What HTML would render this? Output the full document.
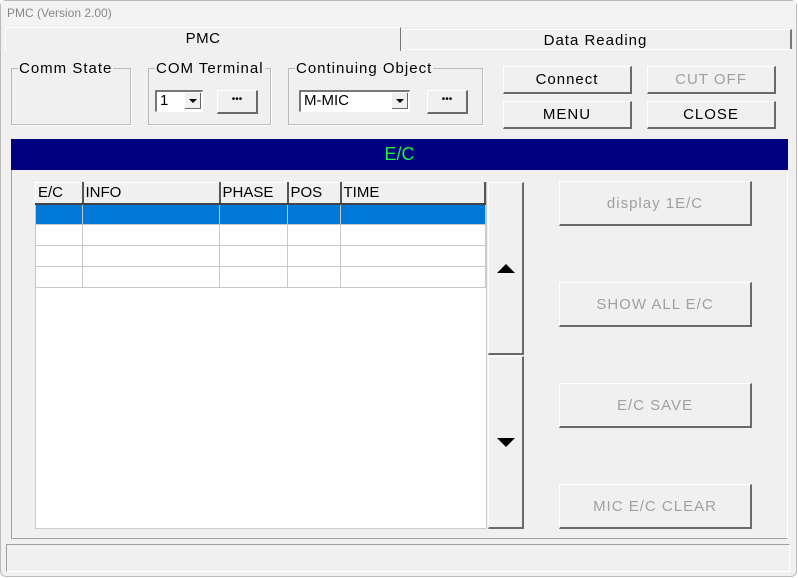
<!DOCTYPE html>
<html><head><style>
*{margin:0;padding:0;box-sizing:border-box}
body{width:798px;height:578px;background:#fff;position:relative;overflow:hidden;font-family:"Liberation Sans",sans-serif;font-size:15px;color:#000}
.a{position:absolute}
.win{left:0;top:0;width:797px;height:577px;background:#f0f0f0;box-shadow:inset 0 0 0 1px #bbb;border-radius:6px;overflow:hidden}
.title{left:1px;top:1px;width:795px;height:26px;background:#f3f3f3}
.btn{position:absolute;background:#f0f0f0;border-top:1px solid #fff;border-left:1px solid #fff;border-right:2px solid #6a6a6a;border-bottom:2px solid #6a6a6a;display:flex;align-items:center;justify-content:center;font-size:15px}
.dis{color:#a0a0a0}
.grp{position:absolute;border:1px solid #bcbcbc;box-shadow:1px 1px 0 #fff}
.grp span{position:absolute;top:-9px;left:6px;background:#f0f0f0;padding:0 1px;font-size:15px;line-height:17px;letter-spacing:1px}
.combo{position:absolute;background:#fff;border-top:2px solid #777;border-left:2px solid #777;border-bottom:1px solid #fff;border-right:1px solid #fff;font-size:15px;padding-left:3px;line-height:17px}
.arr{position:absolute;right:1px;top:1px;width:16px;height:16px;background:#f0f0f0;border-right:1px solid #666;border-bottom:1px solid #666}
.arr:after{content:"";position:absolute;left:4px;top:6px;border-left:4px solid transparent;border-right:4px solid transparent;border-top:4px solid #000}
table{border-collapse:collapse;position:absolute;left:35px;top:182px;width:451px}
td{border:1px solid #c8c8c8;height:21px;padding:0 2px;font-size:15px}
th{font-weight:normal;text-align:left;height:21px;padding:0 2px;border-right:2px solid #555;border-bottom:2px solid #444;border-top:1px solid #fff;border-left:1px solid #fff;background:#f0f0f0;font-size:15px}
</style></head><body>
<div class="a win">
<div class="a title"></div>
<div class="a" style="left:7px;top:6px;font-size:12px;color:#888">PMC (Version 2.00)</div>
<div class="a" style="left:5px;top:27px;width:396px;height:24px;border-top:1px solid #fff;border-left:1px solid #fff;border-right:1px solid #777;text-align:center;font-size:15px;padding-top:2px;letter-spacing:.5px">PMC</div>
<div class="a" style="left:401px;top:29px;width:391px;height:20px;border-top:1px solid #fff;border-right:2px solid #777;text-align:center;font-size:15px;padding-top:2px;letter-spacing:1px">Data Reading</div>
<div class="a" style="left:401px;top:49px;width:391px;height:1px;background:#fff"></div>
<div class="grp" style="left:11px;top:68px;width:120px;height:57px"><span>Comm State</span></div>
<div class="grp" style="left:148px;top:68px;width:123px;height:57px"><span>COM Terminal</span></div>
<div class="grp" style="left:288px;top:68px;width:195px;height:57px"><span>Continuing Object</span></div>
<div class="combo" style="left:155px;top:90px;width:48px;height:22px">1<div class="arr"></div></div>
<div class="btn" style="left:217px;top:90px;width:41px;height:24px;font-size:10px;padding-bottom:4px">•••</div>
<div class="combo" style="left:299px;top:90px;width:111px;height:22px">M-MIC<div class="arr"></div></div>
<div class="btn" style="left:427px;top:90px;width:41px;height:24px;font-size:10px;padding-bottom:4px">•••</div>
<div class="btn" style="left:503px;top:66px;width:129px;height:28px;letter-spacing:1px">Connect</div>
<div class="btn dis" style="left:647px;top:66px;width:129px;height:28px;letter-spacing:1px">CUT OFF</div>
<div class="btn" style="left:503px;top:101px;width:129px;height:28px;letter-spacing:1px">MENU</div>
<div class="btn" style="left:647px;top:101px;width:129px;height:28px;letter-spacing:1px">CLOSE</div>
<div class="a" style="left:11px;top:139px;width:777px;height:31px;background:#000080;color:#22ee44;text-align:center;font-size:18px;line-height:31px">E/C</div>
<div class="a" style="left:11px;top:170px;width:777px;height:369px;border-right:1px solid #fff;border-bottom:1px solid #a0a0a0;border-left:1px solid #a0a0a0"></div>
<div class="a" style="left:35px;top:182px;width:452px;height:347px;background:#fff;border:1px solid #ccc"></div>
<table>
<tr><th style="width:47px">E/C</th><th style="width:137px">INFO</th><th style="width:68px">PHASE</th><th style="width:53px">POS</th><th>TIME</th></tr>
<tr style="background:#0078d7"><td></td><td></td><td></td><td></td><td></td></tr>
<tr><td></td><td></td><td></td><td></td><td></td></tr>
<tr><td></td><td></td><td></td><td></td><td></td></tr>
<tr><td></td><td></td><td></td><td></td><td></td></tr>
</table>
<div class="btn" style="left:488px;top:182px;width:36px;height:173px"><div style="border-left:9px solid transparent;border-right:9px solid transparent;border-bottom:9px solid #000"></div></div>
<div class="btn" style="left:488px;top:356px;width:36px;height:173px"><div style="border-left:9px solid transparent;border-right:9px solid transparent;border-top:9px solid #000"></div></div>
<div class="btn dis" style="left:559px;top:181px;width:193px;height:45px;letter-spacing:1px">display 1E/C</div>
<div class="btn dis" style="left:559px;top:282px;width:193px;height:45px;letter-spacing:1px">SHOW ALL E/C</div>
<div class="btn dis" style="left:559px;top:383px;width:193px;height:45px;letter-spacing:1px">E/C SAVE</div>
<div class="btn dis" style="left:559px;top:484px;width:193px;height:45px;letter-spacing:1px">MIC E/C CLEAR</div>
<div class="a" style="left:6px;top:544px;width:784px;height:28px;border-top:1px solid #a0a0a0;border-left:1px solid #a0a0a0;border-bottom:1px solid #fff;border-right:1px solid #fff"></div>
</div>
</body></html>
